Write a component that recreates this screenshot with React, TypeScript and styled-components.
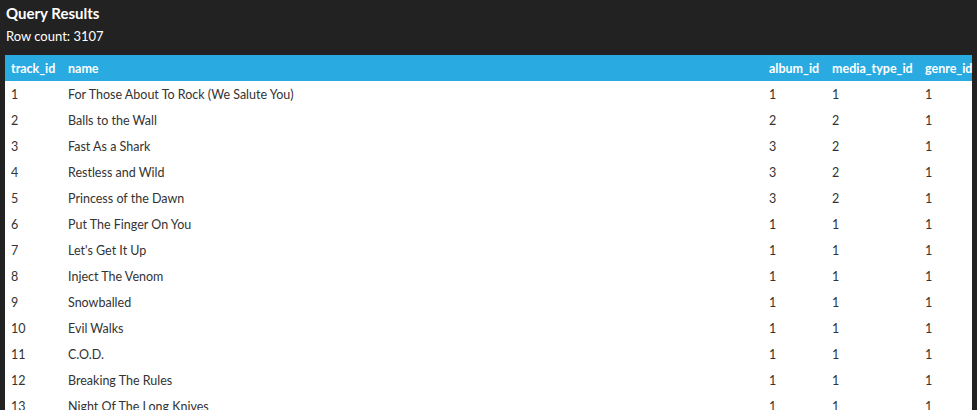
import React from 'react';
import styled, { createGlobalStyle } from 'styled-components';

const Global = createGlobalStyle`
  body { margin: 0; background: #222; font-family: Lato, "Open Sans", sans-serif; }
`;

const Panel = styled.div`
  background: #222;
  height: 410px;
  overflow: hidden;
  padding: 0 5px;
  color: #fff;
`;

const Title = styled.div`
  font-size: 15px;
  font-weight: 700;
  padding: 4px 0 0 1px;
  height: 20px;
`;

const Count = styled.div`
  font-size: 13px;
  padding: 4px 0 0 1px;
  height: 27px;
`;

const Table = styled.table`
  width: 967px;
  border-collapse: collapse;
  table-layout: fixed;
  background: #fff;
  font-size: 12.5px;
`;

const Th = styled.th<{ $w?: number }>`
  width: ${p => (p.$w ? `${p.$w}px` : 'auto')};
  background: #29abe2;
  color: #fff;
  text-align: left;
  font-weight: 700;
  height: 26px;
  padding: 0 6px;
`;

const Td = styled.td`
  color: #333;
  height: 26px;
  padding: 0 6px;
  white-space: nowrap;
`;

const cols: [string, number?][] = [
  ['track_id', 45],
  ['name'],
  ['album_id', 51],
  ['media_type_id', 81],
  ['genre_id', 41],
];

const rows: [number, string, number, number, number][] = [
  [1, 'For Those About To Rock (We Salute You)', 1, 1, 1],
  [2, 'Balls to the Wall', 2, 2, 1],
  [3, 'Fast As a Shark', 3, 2, 1],
  [4, 'Restless and Wild', 3, 2, 1],
  [5, 'Princess of the Dawn', 3, 2, 1],
  [6, 'Put The Finger On You', 1, 1, 1],
  [7, "Let's Get It Up", 1, 1, 1],
  [8, 'Inject The Venom', 1, 1, 1],
  [9, 'Snowballed', 1, 1, 1],
  [10, 'Evil Walks', 1, 1, 1],
  [11, 'C.O.D.', 1, 1, 1],
  [12, 'Breaking The Rules', 1, 1, 1],
  [13, 'Night Of The Long Knives', 1, 1, 1],
];

export default function App() {
  return (
    <>
      <Global />
      <Panel>
        <Title>Query Results</Title>
        <Count>Row count: 3107</Count>
        <Table>
          <thead>
            <tr>
              {cols.map(([c, w]) => (
                <Th key={c} $w={w}>{c}</Th>
              ))}
            </tr>
          </thead>
          <tbody>
            {rows.map(r => (
              <tr key={r[0]}>
                {r.map((v, i) => (
                  <Td key={i}>{v}</Td>
                ))}
              </tr>
            ))}
          </tbody>
        </Table>
      </Panel>
    </>
  );
}
